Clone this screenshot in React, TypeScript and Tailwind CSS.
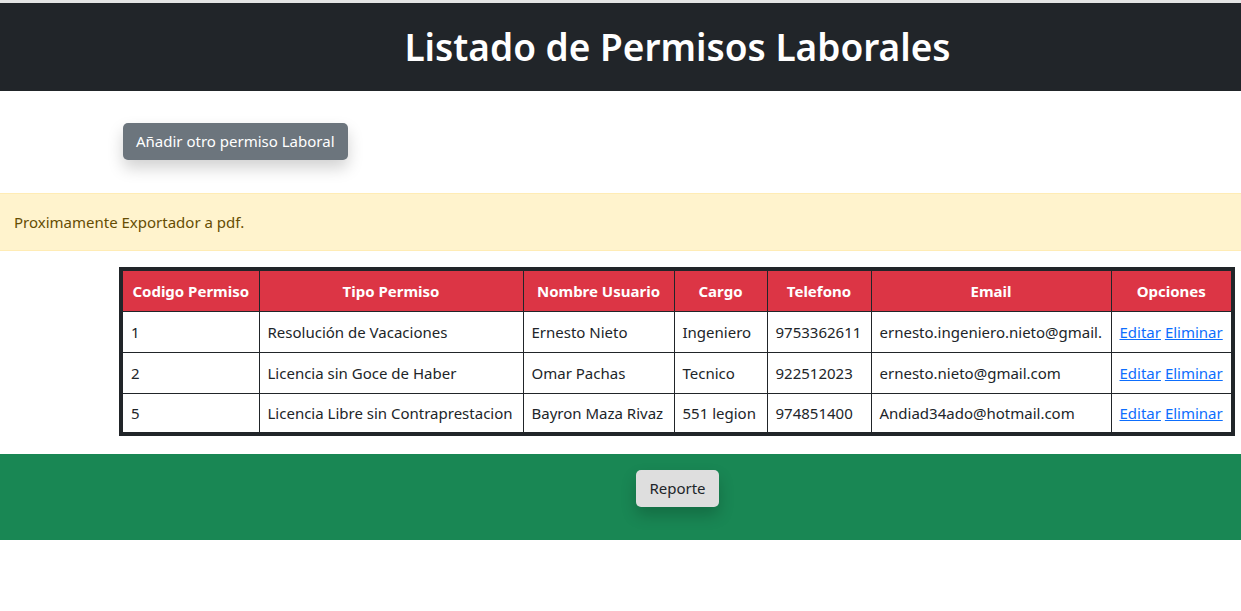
import React from "react";

const rows = [
  {
    id: "1",
    tipo: "Resolución de Vacaciones",
    nombre: "Ernesto Nieto",
    cargo: "Ingeniero",
    tel: "9753362611",
    email: "ernesto.ingeniero.nieto@gmail.",
  },
  {
    id: "2",
    tipo: "Licencia sin Goce de Haber",
    nombre: "Omar Pachas",
    cargo: "Tecnico",
    tel: "922512023",
    email: "ernesto.nieto@gmail.com",
  },
  {
    id: "5",
    tipo: "Licencia Libre sin Contraprestacion",
    nombre: "Bayron Maza Rivaz",
    cargo: "551 legion",
    tel: "974851400",
    email: "Andiad34ado@hotmail.com",
  },
];

const headers = [
  "Codigo Permiso",
  "Tipo Permiso",
  "Nombre Usuario",
  "Cargo",
  "Telefono",
  "Email",
  "Opciones",
];

export default function App() {
  return (
    <div
      className="min-h-[611px] bg-white text-[15px] text-[#212529]"
      style={{ fontFamily: '"Noto Sans", "Open Sans", sans-serif' }}
    >
      <div className="h-[3px] bg-[#e4e4e4]" />
      <header className="flex h-[88px] items-center justify-center bg-[#212529] pl-[114px]">
        <h1 className="text-[37px] font-semibold leading-[48px] text-white">
          Listado de Permisos Laborales
        </h1>
      </header>

      <div className="pl-[123px] pt-[32px] pb-[33px]">
        <button className="h-[37px] rounded-[5px] bg-[#6c757d] px-[13px] text-[15px] text-white shadow-[0_8px_16px_rgba(0,0,0,0.18)]">
          Añadir otro permiso Laboral
        </button>
      </div>

      <div className="flex h-[58px] items-center border-y border-[#ffecb5] bg-[#fff3cd] px-[14px] text-[#664d03]">
        Proximamente Exportador a pdf.
      </div>

      <div className="pl-[119px] pr-[6px] pt-[16px] pb-[18px]">
        <table className="w-[1116px] table-fixed border-collapse border-[4px] border-[#212529]">
          <colgroup>
            <col className="w-[138px]" />
            <col className="w-[264px]" />
            <col className="w-[151px]" />
            <col className="w-[93px]" />
            <col className="w-[104px]" />
            <col className="w-[240px]" />
            <col className="w-[122px]" />
          </colgroup>
          <thead>
            <tr className="bg-[#dc3545] text-white">
              {headers.map((h) => (
                <th
                  key={h}
                  className="h-[42px] border border-[#212529] px-2 text-center font-bold leading-6 whitespace-nowrap"
                >
                  {h}
                </th>
              ))}
            </tr>
          </thead>
          <tbody>
            {rows.map((r) => (
              <tr key={r.id}>
                <td className="h-[41px] border border-[#212529] px-2 leading-6">{r.id}</td>
                <td className="border border-[#212529] px-2 leading-6 whitespace-nowrap">{r.tipo}</td>
                <td className="border border-[#212529] px-2 leading-6 whitespace-nowrap">{r.nombre}</td>
                <td className="border border-[#212529] px-2 leading-6 whitespace-nowrap">{r.cargo}</td>
                <td className="border border-[#212529] px-2 leading-6 whitespace-nowrap">{r.tel}</td>
                <td className="overflow-hidden border border-[#212529] px-2 leading-6 whitespace-nowrap">
                  {r.email}
                </td>
                <td className="border border-[#212529] px-2 leading-6 whitespace-nowrap">
                  <a href="#" className="text-[#0d6efd] underline">
                    Editar
                  </a>{" "}
                  <a href="#" className="text-[#0d6efd] underline">
                    Eliminar
                  </a>
                </td>
              </tr>
            ))}
          </tbody>
        </table>
      </div>

      <footer className="flex h-[86px] justify-center bg-[#198754] pt-[16px] pl-[114px]">
        <button className="h-[37px] rounded-[5px] bg-[#dedede] px-[13px] text-[15px] text-[#212529] shadow-[0_8px_16px_rgba(0,0,0,0.2)]">
          Reporte
        </button>
      </footer>
    </div>
  );
}
